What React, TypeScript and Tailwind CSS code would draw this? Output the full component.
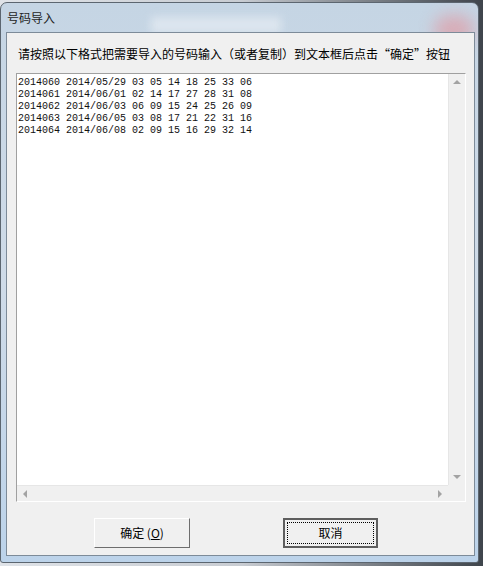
import React from "react";

const LINES = [
  "2014060 2014/05/29 03 05 14 18 25 33 06",
  "2014061 2014/06/01 02 14 17 27 28 31 08",
  "2014062 2014/06/03 06 09 15 24 25 26 09",
  "2014063 2014/06/05 03 08 17 21 22 31 16",
  "2014064 2014/06/08 02 09 15 16 29 32 14",
];

const cjk = "font-['Noto_Sans_CJK_SC','Noto_Sans',sans-serif]";

function Arrow({ dir }: { dir: "up" | "down" | "left" | "right" }) {
  const pts = {
    up: "0,4 4,0 8,4",
    down: "0,0 8,0 4,4",
    left: "4,0 4,8 0,4",
    right: "0,0 4,4 0,8",
  }[dir];
  const w = dir === "up" || dir === "down" ? 8 : 4;
  const h = dir === "up" || dir === "down" ? 4 : 8;
  return (
    <svg width={w} height={h} viewBox={`0 0 ${w} ${h}`}>
      <polygon points={pts} fill="#a3a3a3" />
    </svg>
  );
}

export default function App() {
  return (
    <div className="w-[483px] h-[566px] bg-gradient-to-r from-[#dfe3e8] via-[#c8ccd2] to-[#3f454c] overflow-hidden">
      <div className="relative ml-0 mt-[2px] w-[479px] h-[561px] rounded-t-[7px] rounded-b-[3px] border border-[#5c6670] bg-gradient-to-b from-[#c5d5e4] via-[#cfdbe8] to-[#bcd3ea] overflow-hidden">
        {/* glass blur of the close button behind */}
        <div className="absolute right-[4px] top-[12px] w-[40px] h-[30px] rounded-full bg-[#dca3ad] blur-[8px] opacity-80" />
        <div className="absolute left-[150px] top-[14px] w-[130px] h-[16px] bg-[#dde6ef] blur-[4px]" />
        <div className="relative flex h-full flex-col">
          <div className={`h-[29px] pl-[6px] pt-[9px] text-[12px] leading-[12px] text-[#1e1e1e] ${cjk}`}>
            号码导入
          </div>
          <div className="ml-[5px] mr-[3px] mb-[6px] flex-1 border border-[#7d8b99] bg-[#f0f0f0] flex flex-col">
            <div className={`pl-[11px] pt-[13px] h-[40px] text-[12px] leading-[16px] text-black ${cjk}`}>
              请按照以下格式把需要导入的号码输入（或者复制）到文本框后点击“确定”按钮
            </div>
            <div className="ml-[9px] w-[450px] h-[429px] border border-[#a0a0a0] border-r-white border-b-white bg-white flex flex-col">
              <div className="flex flex-1">
                <div className="flex-1 pl-[1px] pt-[3px] font-['Liberation_Mono',monospace] text-[10px] leading-[12px] text-[#111] whitespace-pre">
                  {LINES.map((l) => (
                    <div key={l}>{l}</div>
                  ))}
                </div>
                <div className="w-[17px] bg-[#f0f0f0] border-l border-[#e6e6e6] flex flex-col items-center justify-between py-[6px]">
                  <Arrow dir="up" />
                  <Arrow dir="down" />
                </div>
              </div>
              <div className="flex h-[16px]">
                <div className="flex-1 bg-[#f0f0f0] border-t border-[#e6e6e6] flex items-center justify-between px-[6px]">
                  <Arrow dir="left" />
                  <Arrow dir="right" />
                </div>
                <div className="w-[17px] bg-[#f0f0f0]" />
              </div>
            </div>
            <div className="flex pl-[87px] pt-[16px] gap-[93px]">
              <button className={`w-[96px] h-[30px] border border-t-white border-l-white border-r-[#6d6d6d] border-b-[#6d6d6d] bg-[#f0f0f0] text-[12px] text-black ${cjk}`}>
                确定 (<span className="underline">O</span>)
              </button>
              <button className={`w-[95px] h-[30px] border-2 border-[#5e5e5e] bg-[#f0f0f0] p-[2px] text-[12px] text-black ${cjk}`}>
                <div className="h-full w-full border border-dotted border-black flex items-center justify-center">
                  取消
                </div>
              </button>
            </div>
          </div>
        </div>
      </div>
    </div>
  );
}
